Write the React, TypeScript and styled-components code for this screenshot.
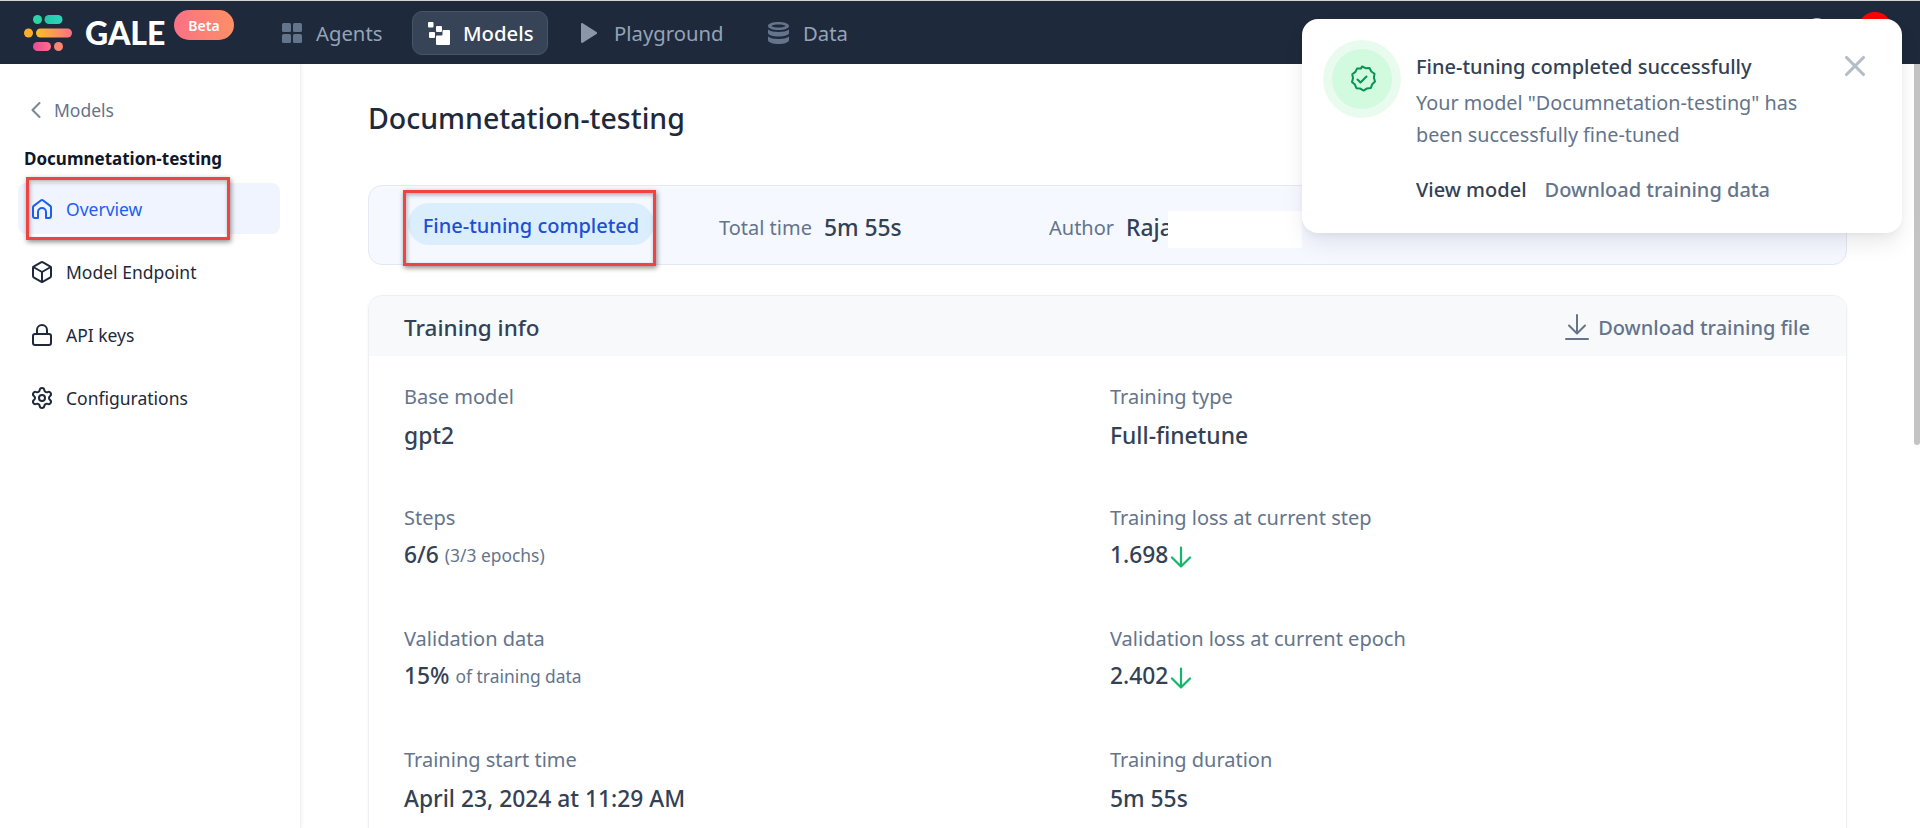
import React from "react";
import styled, { createGlobalStyle } from "styled-components";
import { ChevronLeft, Box, Lock, Settings, X } from "lucide-react";

const Global = createGlobalStyle`
  html, body { margin: 0; padding: 0; height: 100%; overflow: hidden; background: #fff; }
  body { font-family: "Noto Sans", "Liberation Sans", sans-serif; }
  #root { height: 100%; }
`;

const Page = styled.div`
  position: relative;
  width: 1920px;
  height: 828px;
  overflow: hidden;
  display: flex;
  flex-direction: column;
  border-top: 1px solid #d4d4d4;
  box-sizing: border-box;
`;

const TopBar = styled.header`
  height: 63px;
  flex: none;
  background: #1e293b;
  display: flex;
  align-items: center;
  padding-left: 24px;
`;

const Brand = styled.div`
  display: flex;
  align-items: center;
  width: 241px;
  flex: none;
  position: relative;
`;

const BrandName = styled.span`
  font-family: "Lato", "Noto Sans", sans-serif;
  font-size: 32px;
  font-weight: 900;
  color: #fff;
  margin-left: 13px;
`;

const BetaBadge = styled.span`
  position: absolute;
  left: 150px;
  top: -3px;
  width: 60px;
  height: 30px;
  border-radius: 15px;
  background: linear-gradient(90deg, #fb7185, #fd8f66);
  color: #fff;
  font-size: 14px;
  font-weight: 600;
  display: flex;
  align-items: center;
  justify-content: center;
`;

const Nav = styled.nav`
  display: flex;
  align-items: center;
  margin-top: 1px;
`;

const NavItem = styled.div<{ $active?: boolean; $w: number; $gap: number; $pad?: number }>`
  width: ${(p) => p.$w}px;
  height: 44px;
  box-sizing: border-box;
  display: flex;
  align-items: center;
  gap: ${(p) => p.$gap}px;
  padding-left: ${(p) => p.$pad ?? 16}px;
  font-size: 20.300px;
  font-weight: ${(p) => (p.$active ? 500 : 400)};
  color: ${(p) => (p.$active ? "#fff" : "#94a3b8")};
  border-radius: 10px;
  background: ${(p) => (p.$active ? "#374357" : "transparent")};
  border: 1px solid ${(p) => (p.$active ? "#475569" : "transparent")};
`;

const Body = styled.div`
  flex: 1;
  display: flex;
  min-height: 0;
`;

const Sidebar = styled.aside`
  width: 301px;
  flex: none;
  box-sizing: border-box;
  border-right: 1px solid #eef0f3;
  box-shadow: 1px 0 3px rgba(15, 23, 42, 0.05);
  padding: 34px 20px 0 18px;
`;

const BackLink = styled.div`
  display: flex;
  align-items: center;
  gap: 4px;
  padding-left: 4px;
  height: 24px;
  font-size: 17.500px;
  color: #64748b;
`;

const SideTitle = styled.div`
  margin: 25px 0 0 6px;
  height: 24px;
  line-height: 24px;
  font-size: 17px;
  font-weight: 700;
  color: #0f172a;
`;

const SideItem = styled.div<{ $active?: boolean }>`
  height: 51px;
  margin-top: 12px;
  display: flex;
  align-items: center;
  gap: 12px;
  padding-left: 12px;
  border-radius: 8px;
  font-size: 17.500px;
  background: ${(p) => (p.$active ? "#eff4fe" : "transparent")};
  color: ${(p) => (p.$active ? "#1d5ff0" : "#1e293b")};
  &:first-of-type { margin-top: 14px; }
`;

const Main = styled.main`
  flex: 1;
  min-width: 0;
  padding: 30px 73px 0 67px;
  position: relative;
`;

const PageTitle = styled.h1`
  margin: 0;
  height: 48px;
  line-height: 48px;
  font-size: 28.500px;
  font-weight: 500;
  color: #1e293b;
`;

const StatusCard = styled.section`
  margin-top: 43px;
  height: 80px;
  box-sizing: border-box;
  background: #f5f8ff;
  border: 1px solid #e2e8f4;
  border-radius: 14px;
  display: flex;
  align-items: flex-start;
  padding: 17px 0 0 39px;
`;

const StatusPill = styled.span`
  height: 42px;
  width: 246px;
  box-sizing: border-box;
  padding-top: 2px;
  border-radius: 21px;
  background: #dbeefe;
  color: #1d4ed8;
  font-size: 20px;
  font-weight: 500;
  display: flex;
  align-items: center;
  justify-content: center;
  flex: none;
  margin-right: 65px;
`;

const Stat = styled.div<{ $w: number }>`
  display: flex;
  align-items: center;
  gap: 12px;
  height: 42px;
  margin-top: 3px;
  width: ${(p) => p.$w}px;
  flex: none;
`;

const StatLabel = styled.span`
  font-size: 20px;
  color: #64748b;
`;

const StatValue = styled.span`
  font-size: 22.800px;
  font-weight: 500;
  color: #334155;
`;

const InfoCard = styled.section`
  margin-top: 30px;
  border: 1px solid #edeff3;
  border-radius: 14px;
  box-shadow: 0 1px 3px rgba(15, 23, 42, 0.05);
  overflow: hidden;
`;

const InfoHeader = styled.div`
  height: 60px;
  background: #f8f9fb;
  display: flex;
  align-items: center;
  justify-content: space-between;
  padding: 2px 36px 0 35px;
  box-sizing: border-box;
`;

const InfoTitle = styled.span`
  font-size: 22.500px;
  font-weight: 500;
  color: #334155;
`;

const DownloadLink = styled.span`
  display: flex;
  align-items: center;
  gap: 9px;
  font-size: 20px;
  font-weight: 500;
  color: #64748b;
`;

const InfoGrid = styled.div`
  display: grid;
  grid-template-columns: 706px 1fr;
  padding: 25px 36px 60px 35px;
  row-gap: 37px;
`;

const Field = styled.div`
  height: 84px;
  display: flex;
  flex-direction: column;
`;

const FieldLabel = styled.div`
  height: 32px;
  line-height: 32px;
  font-size: 20px;
  color: #64748b;
`;

const FieldValue = styled.div<{ $lift?: boolean }>`
  margin-top: ${(p) => (p.$lift ? 5 : 7)}px;
  height: 32px;
  line-height: 32px;
  font-size: 22.800px;
  font-weight: 500;
  color: #334155;
  display: flex;
  align-items: center;
  gap: 6px;
`;

const FieldNote = styled.span`
  font-size: 17.400px;
  font-weight: 400;
  color: #64748b;
`;

const Toast = styled.aside`
  position: absolute;
  left: 1302px;
  top: 18px;
  width: 600px;
  height: 214px;
  background: #fff;
  border-radius: 16px;
  box-shadow: 0 12px 24px -4px rgba(16, 24, 40, 0.1), 0 4px 8px -2px rgba(16, 24, 40, 0.05);
  box-sizing: border-box;
  padding: 21px 0 0 21px;
  display: flex;
`;

const ToastHalo = styled.div`
  width: 78px;
  height: 78px;
  border-radius: 50%;
  background: #e9fbef;
  display: flex;
  align-items: center;
  justify-content: center;
  flex: none;
`;

const ToastRing = styled.div`
  width: 60px;
  height: 60px;
  border-radius: 50%;
  background: #d1fadf;
  display: flex;
  align-items: center;
  justify-content: center;
`;

const ToastBody = styled.div`
  margin-left: 15px;
  width: 400px;
  display: flex;
  flex-direction: column;
`;

const ToastTitle = styled.div`
  font-size: 20px;
  font-weight: 500;
  line-height: 32px;
  margin-top: 11px;
  color: #334155;
`;

const ToastText = styled.div`
  font-size: 19.800px;
  line-height: 32px;
  color: #64748b;
  margin-top: 4px;
`;

const ToastActions = styled.div`
  display: flex;
  gap: 18px;
  margin-top: 23px;
  font-size: 20px;
  line-height: 32px;
  font-weight: 500;
`;

const ToastAction = styled.span<{ $primary?: boolean }>`
  color: ${(p) => (p.$primary ? "#334155" : "#64748b")};
`;

const ToastClose = styled.span`
  position: absolute;
  right: 30px;
  top: 30px;
  color: #b4bcc8;
  display: flex;
`;

const Annotation = styled.div<{ $x: number; $y: number; $w: number; $h: number }>`
  position: absolute;
  left: ${(p) => p.$x}px;
  top: ${(p) => p.$y}px;
  width: ${(p) => p.$w}px;
  height: ${(p) => p.$h}px;
  box-sizing: border-box;
  border: 3px solid #f04444;
  box-shadow: 1px 2px 5px rgba(0, 0, 0, 0.45), inset 1px 2px 4px rgba(0, 0, 0, 0.3);
  pointer-events: none;
`;

const Redaction = styled.div`
  position: absolute;
  left: 1168px;
  top: 210px;
  width: 134px;
  height: 37px;
  background: #fff;
`;

const Scrollbar = styled.div`
  position: absolute;
  right: 0;
  top: 63px;
  width: 6px;
  height: 381px;
  background: #c4c4c4;
  border-radius: 0 0 3px 3px;
`;

const Avatar = styled.div`
  position: absolute;
  left: 1858px;
  top: 11px;
  width: 34px;
  height: 34px;
  border-radius: 50%;
  background: #ff0000;
`;

const HelpDot = styled.div`
  position: absolute;
  left: 1805px;
  top: 17px;
  width: 24px;
  height: 24px;
  border-radius: 50%;
  border: 2px solid #b0b8c4;
  box-sizing: border-box;
`;

const LogoMark = () => (
  <svg width="48" height="36" viewBox="0 0 48 36">
    <defs>
      <linearGradient id="lg1" x1="0" x2="1"><stop offset="0" stopColor="#22c8a4" /><stop offset="1" stopColor="#2dd4bf" /></linearGradient>
      <linearGradient id="lg2" x1="0" x2="1"><stop offset="0" stopColor="#fbbf24" /><stop offset="1" stopColor="#fb7185" /></linearGradient>
      <linearGradient id="lg3" x1="0" x2="1"><stop offset="0" stopColor="#ec4899" /><stop offset="1" stopColor="#fb7185" /></linearGradient>
    </defs>
    <circle cx="13.500" cy="4.500" r="4.500" fill="#2dd4a4" />
    <rect x="20.500" y="0" width="18" height="9" rx="4.500" fill="url(#lg1)" />
    <circle cx="4.500" cy="18" r="4.500" fill="#fbad2c" />
    <rect x="12" y="13.500" width="36" height="9" rx="4.500" fill="url(#lg2)" />
    <rect x="9" y="27" width="18" height="9" rx="4.500" fill="url(#lg3)" />
    <circle cx="34.500" cy="31.500" r="4.500" fill="#fb8573" />
  </svg>
);

const AgentsIcon = () => (
  <svg width="20" height="20" viewBox="0 0 20 20" fill="#64748b">
    <rect x="0" y="0" width="9" height="9" rx="1.500" />
    <rect x="11" y="0" width="9" height="9" rx="1.500" />
    <rect x="0" y="11" width="9" height="9" rx="1.500" />
    <rect x="11" y="11" width="9" height="9" rx="1.500" />
  </svg>
);

const ModelsIcon = () => (
  <svg width="22" height="23" viewBox="0 0 22 23" fill="#fff">
    <rect x="0" y="0" width="5.500" height="5.500" rx="1" />
    <rect x="8" y="4" width="6" height="6" rx="1" />
    <rect x="1" y="10" width="6" height="6" rx="1" />
    <path d="M15.500 8H21a1 1 0 0 1 1 1v13a1 1 0 0 1-1 1H9a1 1 0 0 1-1-1v-7.500a1 1 0 0 1 1-1h4.500a1 1 0 0 0 1-1V9a1 1 0 0 1 1-1z" />
  </svg>
);

const PlayIcon = () => (
  <svg width="16" height="20" viewBox="0 0 16 20" fill="#8b96a8">
    <path d="M0 1.200C0 .3.9-.2 1.700.3L15.500 9c.7.4.7 1.500 0 2L1.700 19.700C.9 20.200 0 19.700 0 18.800z" />
  </svg>
);

const DataIcon = () => (
  <svg width="21" height="22" viewBox="0 0 21 22" fill="#64748b">
    <ellipse cx="10.500" cy="4" rx="7" ry="2" fill="#1e293b" />
    <path fillRule="evenodd" d="M10.500 0C16 0 21 1.500 21 4s-5 4-10.500 4S0 6.500 0 4s5-4 10.500-4zM10.500 2.500C7 2.500 3.500 3.200 3.500 4s3.500 1.500 7 1.500 7-.7 7-1.500-3.500-1.500-7-1.500z" />
    <path d="M0 7.500C1.800 9.200 6 10 10.500 10S19.200 9.200 21 7.500V11c0 2-5 3.500-10.500 3.500S0 13 0 11z" />
    <path d="M0 14.500C1.800 16.200 6 17 10.500 17s8.700-.8 10.500-2.500V18c0 2.500-5 4-10.500 4S0 20.500 0 18z" />
  </svg>
);

const HomeIcon = () => (
  <svg width="24" height="24" viewBox="0 0 24 24" fill="none" stroke="currentColor" strokeWidth="2" strokeLinecap="round" strokeLinejoin="round">
    <path d="M8 21H5a2 2 0 0 1-2-2v-8.500a2 2 0 0 1 .8-1.600l7-5.400a2 2 0 0 1 2.400 0l7 5.400a2 2 0 0 1 .8 1.600V19a2 2 0 0 1-2 2h-3v-6a4 4 0 0 0-8 0z" />
  </svg>
);

const Badge = () => (
  <svg width="28" height="28" viewBox="0 0 28 28" fill="none" stroke="#079455" strokeWidth="2" strokeLinecap="round" strokeLinejoin="round">
    <path d="M14 1.500l3.600 1.700 3.900-.2 1.800 3.500 3.200 2.300-.6 3.900 1.100 3.800-2.800 2.700-1.300 3.700-3.900.5-3.300 2.200-3.400-2-3.900-.4-1.500-3.600-2.900-2.600 1-3.800-.7-3.900 3.100-2.400 1.700-3.500 3.900.1z" />
    <path d="M9.500 14.500l3 3 6-6" />
  </svg>
);

const DownArrow = styled.svg`
  margin: 4px 0 0 -4px;
  flex: none;
`;

const Down = () => (
  <DownArrow width="22" height="22" viewBox="0 0 22 22" fill="none" stroke="#12b76a" strokeWidth="2.200" strokeLinecap="round" strokeLinejoin="round">
    <path d="M11 1.500v19M2 11.500l9 9 9-9" />
  </DownArrow>
);

const DownloadIcon = () => (
  <svg width="24" height="26" viewBox="0 0 24 26" fill="none" stroke="#64748b" strokeWidth="2" strokeLinecap="round" strokeLinejoin="round">
    <path d="M12 1v18M4 11.500l8 8 8-8" />
    <path d="M1 25h22" />
  </svg>
);

export default function App() {
  return (
    <Page>
      <Global />
      <TopBar>
        <Brand>
          <LogoMark />
          <BrandName>GALE</BrandName>
          <BetaBadge>Beta</BetaBadge>
        </Brand>
        <Nav>
          <NavItem $w={147} $gap={14}><AgentsIcon />Agents</NavItem>
          <NavItem $w={136} $gap={13} $pad={15} $active><ModelsIcon />Models</NavItem>
          <NavItem $w={202} $gap={17} $pad={32}><PlayIcon />Playground</NavItem>
          <NavItem $w={120} $gap={14} $pad={17}><DataIcon />Data</NavItem>
        </Nav>
      </TopBar>
      <Body>
        <Sidebar>
          <BackLink><ChevronLeft size={28} strokeWidth={1.800} color="#7b8794" />Models</BackLink>
          <SideTitle>Documnetation-testing</SideTitle>
          <SideItem $active><HomeIcon />Overview</SideItem>
          <SideItem><Box size={24} />Model Endpoint</SideItem>
          <SideItem><Lock size={24} />API keys</SideItem>
          <SideItem><Settings size={24} />Configurations</SideItem>
        </Sidebar>
        <Main>
          <PageTitle>Documnetation-testing</PageTitle>
          <StatusCard>
            <StatusPill>Fine-tuning completed</StatusPill>
            <Stat $w={330}>
              <StatLabel>Total time</StatLabel>
              <StatValue>5m 55s</StatValue>
            </Stat>
            <Stat $w={300}>
              <StatLabel>Author</StatLabel>
              <StatValue>Raja</StatValue>
            </Stat>
          </StatusCard>
          <InfoCard>
            <InfoHeader>
              <InfoTitle>Training info</InfoTitle>
              <DownloadLink><DownloadIcon />Download training file</DownloadLink>
            </InfoHeader>
            <InfoGrid>
              <Field><FieldLabel>Base model</FieldLabel><FieldValue>gpt2</FieldValue></Field>
              <Field><FieldLabel>Training type</FieldLabel><FieldValue>Full-finetune</FieldValue></Field>
              <Field><FieldLabel>Steps</FieldLabel><FieldValue $lift>6/6<FieldNote>(3/3 epochs)</FieldNote></FieldValue></Field>
              <Field><FieldLabel>Training loss at current step</FieldLabel><FieldValue $lift>1.698<Down /></FieldValue></Field>
              <Field><FieldLabel>Validation data</FieldLabel><FieldValue $lift>15%<FieldNote>of training data</FieldNote></FieldValue></Field>
              <Field><FieldLabel>Validation loss at current epoch</FieldLabel><FieldValue $lift>2.402<Down /></FieldValue></Field>
              <Field><FieldLabel>Training start time</FieldLabel><FieldValue>April 23, 2024 at 11:29 AM</FieldValue></Field>
              <Field><FieldLabel>Training duration</FieldLabel><FieldValue>5m 55s</FieldValue></Field>
            </InfoGrid>
          </InfoCard>
        </Main>
      </Body>
      <Scrollbar />
      <Redaction />
      <Annotation $x={26} $y={176} $w={204} $h={63} />
      <Annotation $x={403} $y={189} $w={253} $h={76} />
      <HelpDot />
      <Avatar />
      <Toast>
        <ToastHalo><ToastRing><Badge /></ToastRing></ToastHalo>
        <ToastBody>
          <ToastTitle>Fine-tuning completed successfully</ToastTitle>
          <ToastText>Your model "Documnetation-testing" has been successfully fine-tuned</ToastText>
          <ToastActions>
            <ToastAction $primary>View model</ToastAction>
            <ToastAction>Download training data</ToastAction>
          </ToastActions>
        </ToastBody>
        <ToastClose><X size={34} strokeWidth={2.200} /></ToastClose>
      </Toast>
    </Page>
  );
}
